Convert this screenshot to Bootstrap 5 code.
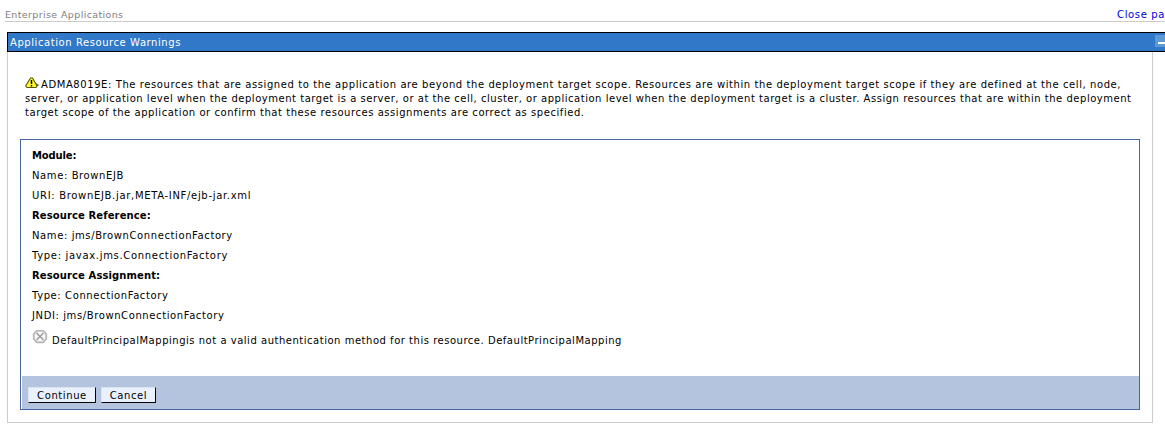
<!DOCTYPE html>
<html lang="en">
<head>
<meta charset="utf-8">
<title>Enterprise Applications</title>
<link href="https://cdn.jsdelivr.net/npm/bootstrap@5.3.0/dist/css/bootstrap.min.css" rel="stylesheet">
<style>
html,body{overflow:hidden}
body{font:10px/14px Verdana,"DejaVu Sans",sans-serif;letter-spacing:.6px;color:#000;background:#fff;height:442px}
.crumbs{margin-left:5px;height:22px;padding-top:8px;border-bottom:1px solid #ccc;color:#808080}
.crumbs span{font-size:9.5px;letter-spacing:.37px}
.crumbs a{color:#00d;width:48px;letter-spacing:.65px}
.titlebar{margin:10px 0 0 7px;height:20px;background:#3178c8;border:1px solid #000;border-right:0;color:#fff}
.titlebar span{padding:3px 0 0 2px;letter-spacing:.57px}
.mini{width:10px;height:12px;background:#5c9ad6;margin-top:2px}
.mini i{width:7px;height:2px;background:#fff;margin:7px 0 0 3px}
.panel{margin-left:7px;width:1146px;height:371px;border:1px solid #ccc;border-top:0;padding:26px 12px 0}
.message{padding-left:5px;height:61px;letter-spacing:.55px}
.message svg{margin-top:-1px}
.first-line{letter-spacing:.58px}
.second-line{letter-spacing:.525px}
.box{width:1120px;height:271px;border:1px solid #4766a0}
.details{height:236px;padding:6px 0 0 11px;line-height:20px}
.details .fw-bold{letter-spacing:.11px}
.details .module{letter-spacing:-.15px}
.wide{letter-spacing:.68px}
.fault{padding-top:5px;letter-spacing:.52px}
.fault svg{margin-top:-1px}
.footbar{height:33px;margin-left:1px;background:#b5c4de;padding:11px 0 0 6px;gap:5px}
.act{font:inherit;letter-spacing:.6px;line-height:14px;height:16px;background:#e9f1fe;border:1px solid #dce4f0;border-right-color:#000;border-bottom-color:#000;border-radius:0;padding:1px 0 0;color:#000}
.act-continue{width:68px}
.act-cancel{width:55px}
</style>
</head>
<body>
<header class="crumbs d-flex justify-content-between"><span>Enterprise Applications</span><a class="text-nowrap text-decoration-none" href="#">Close pa</a></header>
<div class="titlebar d-flex justify-content-between align-items-start"><span>Application Resource Warnings</span><div class="mini d-flex"><i></i></div></div>
<main class="panel">
<div class="message text-nowrap">
<div class="d-flex first-line"><svg width="16" height="14" viewBox="0 0 16 14"><path d="M9 5l5.500 3-4 2.500z" fill="#777"/><path d="M5.500 1h2l4.500 8-1 1.500H2L.7 9z" fill="#ff3" stroke="#550" stroke-width="1.100"/><path d="M6.500 3v4M6.500 8v1.500" stroke="#000" stroke-width="1.500"/></svg><span>ADMA8019E: The resources that are assigned to the application are beyond the deployment target scope. Resources are within the deployment target scope if they are defined at the cell, node,</span></div>
<div class="second-line"><span>server, or application level when the deployment target is a server, or at the cell, cluster, or application level when the deployment target is a cluster. Assign resources that are within the deployment</span></div>
<div><span>target scope of the application or confirm that these resources assignments are correct as specified.</span></div>
</div>
<section class="box">
<div class="details">
<div class="fw-bold module">Module:</div><div>Name: BrownEJB</div><div class="wide">URI: BrownEJB.jar,META-INF/ejb-jar.xml</div>
<div class="fw-bold">Resource Reference:</div><div>Name: jms/BrownConnectionFactory</div><div class="wide">Type: javax.jms.ConnectionFactory</div>
<div class="fw-bold">Resource Assignment:</div><div>Type: ConnectionFactory</div><div>JNDI: jms/BrownConnectionFactory</div>
<div class="d-flex fault"><svg width="20" height="16" viewBox="0 0 20 16"><path d="M5 .7h6l3.300 3.300v5L11 12.300H5L1.700 9V4z" fill="#f4f4f4" stroke="#b4b4b4" stroke-width="1.700"/><path d="M4.500 3l7 7M11.500 3l-7 7" stroke="#999" stroke-width="1.200"/></svg><span>DefaultPrincipalMappingis not a valid authentication method for this resource. DefaultPrincipalMapping</span></div>
</div>
<div class="footbar d-flex"><button class="btn act act-continue">Continue</button><button class="btn act act-cancel">Cancel</button></div>
</section>
</main>
<script src="https://cdn.jsdelivr.net/npm/bootstrap@5.3.0/dist/js/bootstrap.bundle.min.js"></script>
</body>
</html>
